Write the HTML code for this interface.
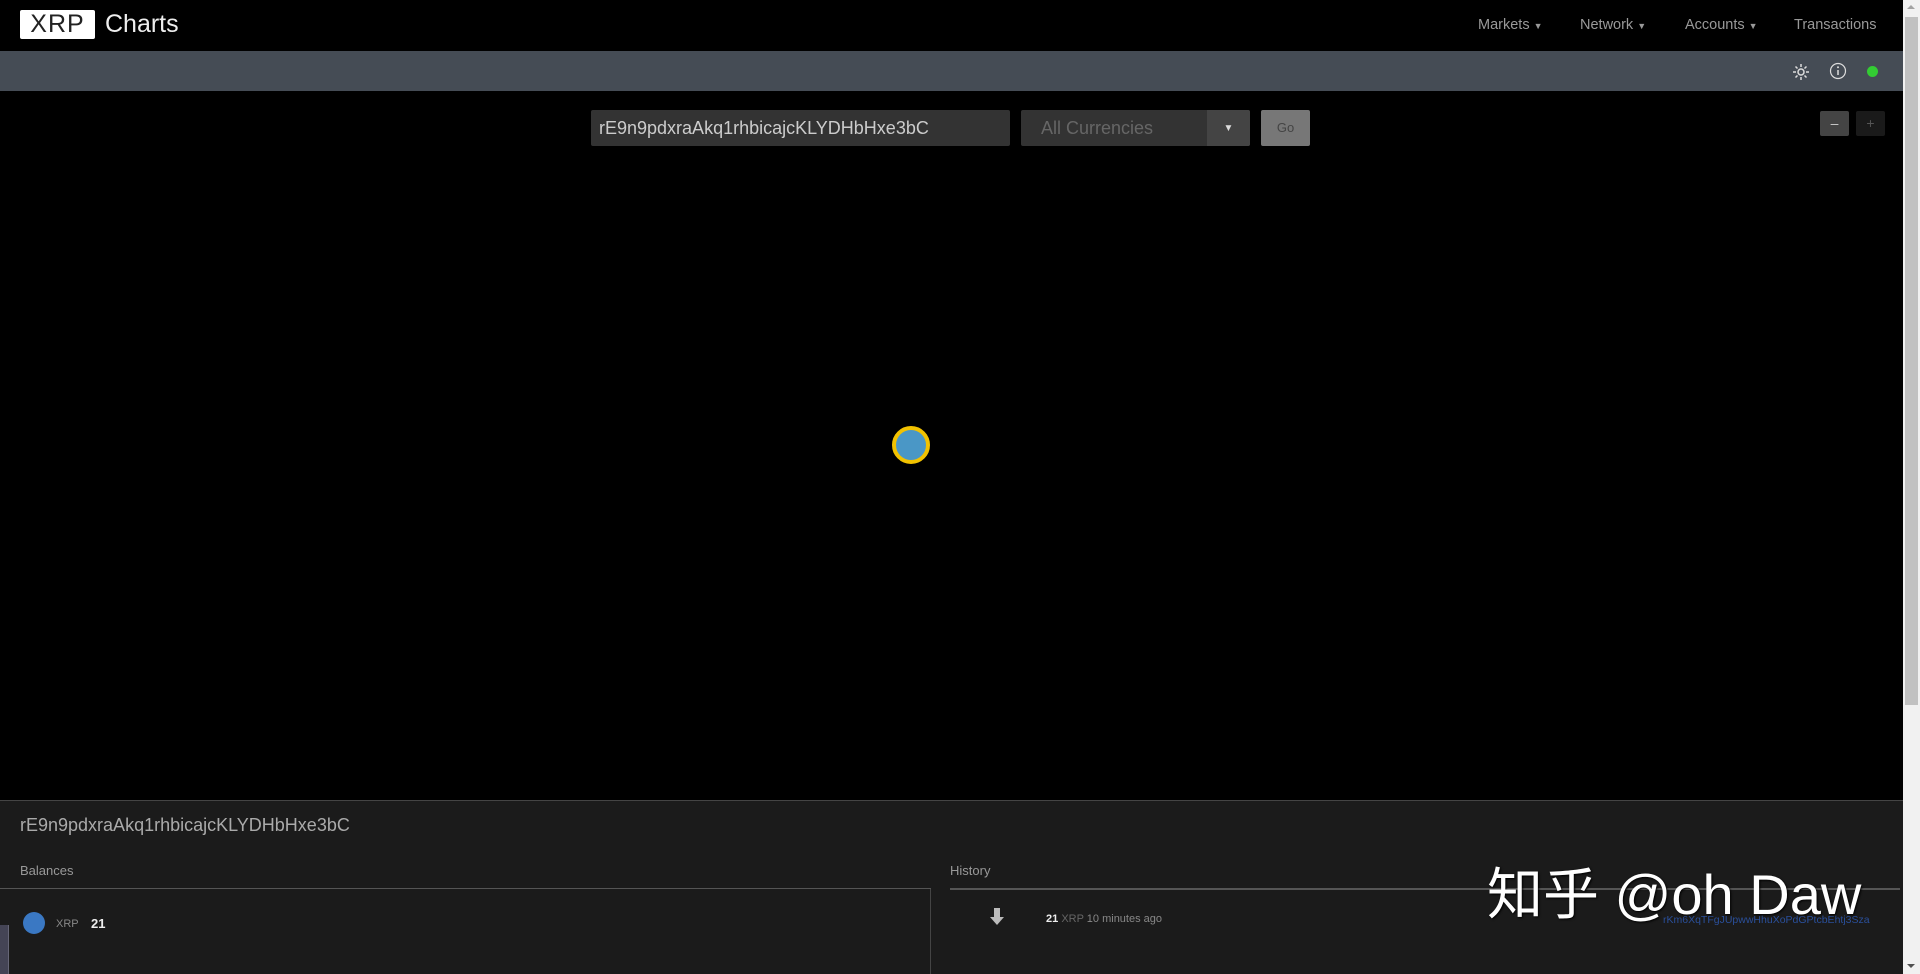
<!DOCTYPE html>
<html><head><meta charset="utf-8"><style>
*{margin:0;padding:0;box-sizing:border-box}
body{width:1920px;height:974px;background:#000;overflow:hidden;position:relative;font-family:"Liberation Sans",sans-serif}
.a{position:absolute}
</style></head><body>
<!-- nav -->
<div class="a" style="left:0;top:0;width:1903px;height:51px;background:#000"></div>
<div class="a" style="left:20px;top:10px;width:75px;height:29px;background:#fff;border-radius:2px;color:#222;font-size:25px;line-height:29px;text-align:center;letter-spacing:1px">XRP</div>
<div class="a" style="left:105px;top:9px;color:#eee;font-size:25px;line-height:30px">Charts</div>
<div class="a" style="left:1478px;top:17px;color:#999;font-size:14.5px">Markets <span style="font-size:9px">▼</span></div>
<div class="a" style="left:1580px;top:17px;color:#999;font-size:14.5px">Network <span style="font-size:9px">▼</span></div>
<div class="a" style="left:1685px;top:17px;color:#999;font-size:14.5px">Accounts <span style="font-size:9px">▼</span></div>
<div class="a" style="left:1794px;top:17px;color:#999;font-size:14.5px">Transactions</div>
<!-- gray bar -->
<div class="a" style="left:0;top:51px;width:1903px;height:40px;background:#454c55"></div>
<svg class="a" style="left:1791px;top:62px" width="20" height="20" viewBox="0 0 20 20" stroke="#ddd" stroke-width="1.5" fill="none"><circle cx="10" cy="10" r="3"/><path d="M10 2v3M10 15v3M2 10h3M15 10h3M4.5 4.5l2 2M13.5 13.5l2 2M4.5 15.5l2-2M13.5 6.5l2-2"/></svg>
<svg class="a" style="left:1829px;top:62px" width="18" height="18" viewBox="0 0 18 18"><circle cx="9" cy="9" r="7.5" stroke="#ddd" stroke-width="1.2" fill="none"/><circle cx="9" cy="5.3" r="1" fill="#ddd"/><path d="M9 8v5" stroke="#ddd" stroke-width="1.5"/></svg>
<div class="a" style="left:1867px;top:66px;width:11px;height:11px;border-radius:50%;background:#3c3"></div>
<!-- search -->
<div class="a" style="left:591px;top:110px;width:419px;height:36px;background:#333;border-radius:2px;color:#ccc;font-size:18px;line-height:36px;padding-left:8px;white-space:nowrap">rE9n9pdxraAkq1rhbicajcKLYDHbHxe3bC</div>
<div class="a" style="left:1021px;top:110px;width:229px;height:36px;background:#333;border-radius:2px;color:#666;font-size:18px;line-height:36px;padding-left:20px">All Currencies</div>
<div class="a" style="left:1207px;top:110px;width:43px;height:36px;background:#444;border-radius:0 2px 2px 0;color:#ddd;font-size:10px;line-height:38px;text-align:center">▼</div>
<div class="a" style="left:1261px;top:110px;width:49px;height:36px;background:#777;border-radius:2px;color:#444;font-size:13px;line-height:36px;text-align:center">Go</div>
<div class="a" style="left:1820px;top:111px;width:29px;height:25px;background:#444;border-radius:2px;color:#ccc;font-size:14px;line-height:25px;text-align:center">–</div>
<div class="a" style="left:1856px;top:111px;width:29px;height:25px;background:#1a1a1a;border-radius:2px;color:#555;font-size:14px;line-height:25px;text-align:center">+</div>
<!-- node -->
<div class="a" style="left:892px;top:426px;width:38px;height:38px;border-radius:50%;background:#4a97c6;border:4px solid #f2c200"></div>
<!-- bottom panel -->
<div class="a" style="left:0;top:800px;width:1903px;height:174px;background:#1b1b1b;border-top:1px solid #444"></div>
<div class="a" style="left:20px;top:815px;color:#aaa;font-size:18px">rE9n9pdxraAkq1rhbicajcKLYDHbHxe3bC</div>
<div class="a" style="left:20px;top:863px;color:#999;font-size:13px">Balances</div>
<div class="a" style="left:950px;top:863px;color:#999;font-size:13px">History</div>
<div class="a" style="left:0;top:888px;width:931px;height:1px;background:#555"></div>
<div class="a" style="left:950px;top:888px;width:950px;height:2px;background:#555"></div>
<div class="a" style="left:930px;top:889px;width:1px;height:85px;background:#444"></div>
<div class="a" style="left:23px;top:912px;width:22px;height:22px;border-radius:50%;background:#3a78c3"></div>
<div class="a" style="left:56px;top:918px;color:#888;font-size:11px">XRP</div>
<div class="a" style="left:91px;top:916px;color:#eee;font-size:13px;font-weight:bold">21</div>
<div class="a" style="left:0;top:925px;width:9px;height:49px;background:#445;border-right:1px solid #667"></div>
<svg class="a" style="left:990px;top:908px" width="14" height="18" viewBox="0 0 14 18"><path d="M4 0h6v9h4l-7 8-7-8h4z" fill="#bbb"/></svg>
<div class="a" style="left:1046px;top:913px;color:#888;font-size:11px"><b style="color:#eee">21</b> <span style="color:#666">XRP</span> 10 minutes ago</div>
<div class="a" style="left:1663px;top:914px;color:#2a4f9a;font-size:10.5px">rKm6XqTFgJUpwwHhuXoPdGPtcbEhtj3Sza</div>
<div class="a" style="left:1487px;top:860px;color:#fff;font-size:56px;line-height:70px;font-family:'Liberation Sans','Noto Sans CJK SC',sans-serif;text-shadow:1px 1px 2px #000">知乎 @oh Daw</div>
<!-- scrollbar -->
<div class="a" style="left:1903px;top:0;width:17px;height:974px;background:#f1f1f1"></div>
<div class="a" style="left:1905px;top:17px;width:13px;height:688px;background:#c1c1c1"></div>
<div class="a" style="left:1907px;top:5px;width:0;height:0;border-left:4px solid transparent;border-right:4px solid transparent;border-bottom:4px solid #a3a3a3"></div>
<div class="a" style="left:1907px;top:964px;width:0;height:0;border-left:4px solid transparent;border-right:4px solid transparent;border-top:4px solid #505050"></div>
</body></html>
